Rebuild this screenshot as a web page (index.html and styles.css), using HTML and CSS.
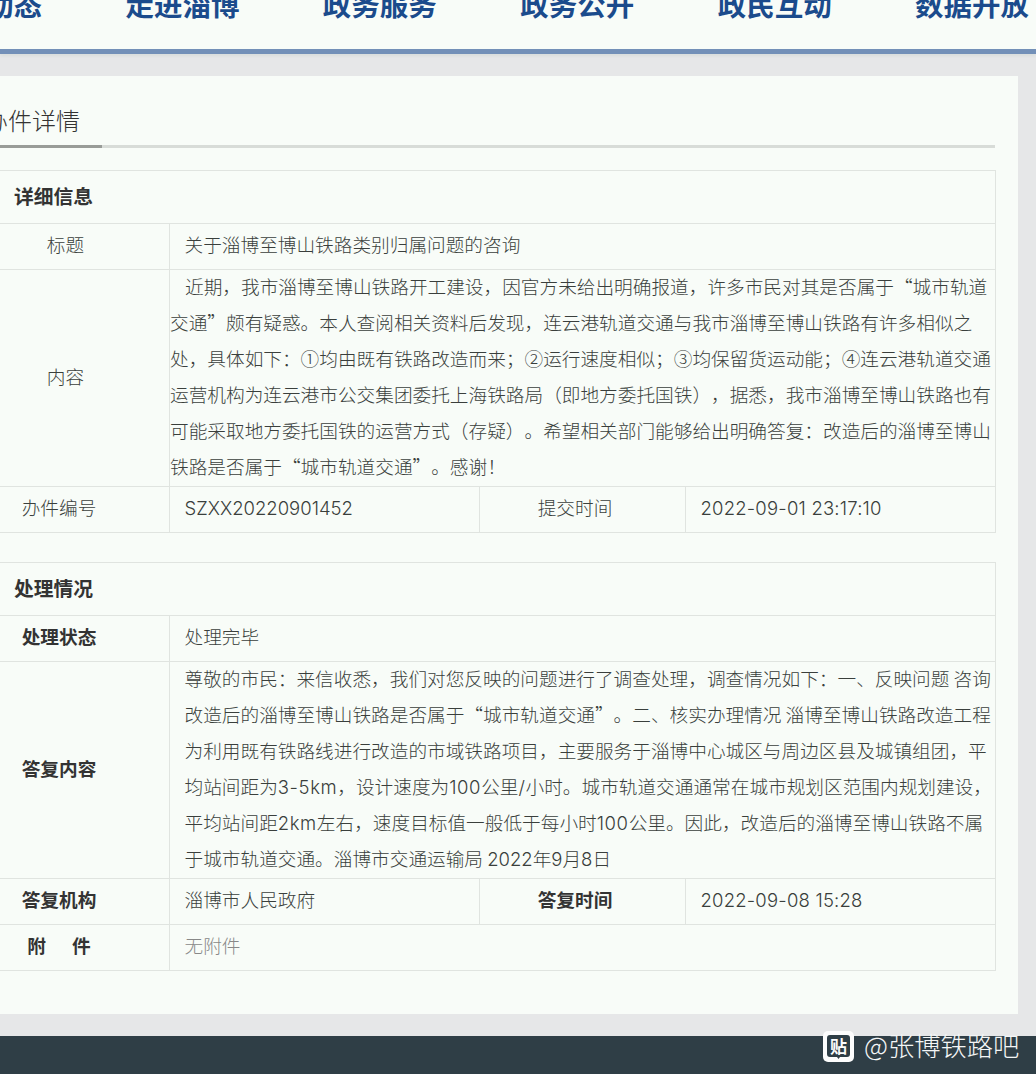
FILE: index.html
```html
<!DOCTYPE html>
<html lang="zh-CN">
<head>
<meta charset="utf-8">
<title>办件详情</title>
<link rel="stylesheet" href="styles.css">
</head>
<body>
<div class="page">
  <header class="masthead">
    <nav class="nav">
      <a>城市动态</a><a>走进淄博</a><a>政务服务</a><a>政务公开</a><a>政民互动</a><a>数据开放</a>
    </nav>
  </header>
  <main class="card">
    <div class="tabs"><span class="tab">办件详情</span></div>
    <table class="detail">
      <colgroup><col class="narrow"><col class="wide"><col class="narrow"><col class="wide"></colgroup>
      <tr class="head"><th colspan="4">详细信息</th></tr>
      <tr><td class="label">标题</td><td colspan="3" class="value">关于淄博至博山铁路类别归属问题的咨询</td></tr>
      <tr><td class="label">内容</td><td colspan="3" class="prose indent"><div class="prose-body"><span class="first">近期，我市淄博至博山铁路开工建设，因官方未给出明确报道，许多市民对其是否属于“城市轨道</span><br>交通”颇有疑惑。本人查阅相关资料后发现，连云港轨道交通与我市淄博至博山铁路有许多相似之<br>处，具体如下：①均由既有铁路改造而来；②运行速度相似；③均保留货运动能；④连云港轨道交通<br>运营机构为连云港市公交集团委托上海铁路局（即地方委托国铁），据悉，我市淄博至博山铁路也有<br>可能采取地方委托国铁的运营方式（存疑）。希望相关部门能够给出明确答复：改造后的淄博至博山<br>铁路是否属于“城市轨道交通”。感谢！</div></td></tr>
      <tr><td class="label offset">办件编号</td><td class="value"><span class="num">SZXX20220901452</span></td><td class="label offset">提交时间</td><td class="value"><span class="num stamp">2022-09-01 23:17:10</span></td></tr>
    </table>
    <table class="detail strong">
      <colgroup><col class="narrow"><col class="wide"><col class="narrow"><col class="wide"></colgroup>
      <tr class="head"><th colspan="4">处理情况</th></tr>
      <tr><td class="label offset">处理状态</td><td colspan="3" class="value">处理完毕</td></tr>
      <tr><td class="label offset">答复内容</td><td colspan="3" class="prose"><div class="prose-body">尊敬的市民：来信收悉，我们对您反映的问题进行了调查处理，调查情况如下：一、反映问题 咨询<br>改造后的淄博至博山铁路是否属于“城市轨道交通”。二、核实办理情况 淄博至博山铁路改造工程<br>为利用既有铁路线进行改造的市域铁路项目，主要服务于淄博中心城区与周边区县及城镇组团，平<br>均站间距为<span class="num loose">3-5km</span>，设计速度为<span class="num loose">100</span>公里<span class="num loose">/</span>小时。城市轨道交通通常在城市规划区范围内规划建设，<br>平均站间距<span class="num loose">2km</span>左右，速度目标值一般低于每小时<span class="num loose">100</span>公里。因此，改造后的淄博至博山铁路不属<br>于城市轨道交通。淄博市交通运输局 <span class="num">2022</span>年<span class="num">9</span>月<span class="num">8</span>日</div></td></tr>
      <tr><td class="label offset">答复机构</td><td class="value">淄博市人民政府</td><td class="label offset">答复时间</td><td class="value"><span class="num stamp">2022-09-08 15:28</span></td></tr>
      <tr><td class="label offset">附<span class="gap"></span>件</td><td colspan="3" class="value muted">无附件</td></tr>
    </table>
  </main>
  <footer class="footer"></footer>
</div>
<div class="mark">
  <svg class="mark-icon" viewBox="0 0 31 31" aria-hidden="true">
    <rect x="0" y="0" width="31" height="31" rx="5" fill="#fdfdfd"/>
    <path d="M7 4h17a3 3 0 0 1 3 3v16a3 3 0 0 1-3 3h-7l-1.500 2-1.500-2H7a3 3 0 0 1-3-3V7a3 3 0 0 1 3-3z" fill="#2f3e46"/>
    <text x="15.500" y="21.500" text-anchor="middle" class="mark-glyph">贴</text>
  </svg>
  <span class="mark-text">@张博铁路吧</span>
</div>
</body>
</html>
```
FILE: styles.css
```css
* { box-sizing: border-box; }
html, body { margin: 0; height: 1074px; overflow: hidden; }
body {
  position: relative;
  background: #e6e7e8;
  font-family: "Noto Sans CJK SC", sans-serif;
  font-weight: 300;
  color: #3a3f3c;
  font-size: 18.670px;
  text-spacing-trim: space-all;
}
.num { font-family: Inter, sans-serif; font-size: 18.500px; line-height: 1; }
.stamp { letter-spacing: 0.200px; }
.loose { letter-spacing: 0.600px; }
.page { margin-top: -30px; }
.masthead {
  position: relative;
  height: 84px;
  background: #f8fcf8;
  border-bottom: 5px solid #7390b8;
  box-shadow: 0 2px 3px rgba(0, 60, 40, 0.06);
  overflow: hidden;
}
.nav {
  display: flex;
  gap: 83.400px;
  margin-left: -72px;
  width: 1300px;
  padding-top: 14px;
  font-size: 28.500px;
  line-height: 40px;
  font-weight: 700;
  color: #1b4b8c;
  white-space: nowrap;
}
.card {
  width: 1078px;
  height: 938px;
  margin: 22px 0 22px -60px;
  padding: 24px 23px 0;
  background: #f8fcf8;
}
.tabs {
  height: 48px;
  border-bottom: 3px solid #d8dcd8;
}
.tab {
  display: block;
  width: 139px;
  height: 48px;
  padding-left: 21px;
  font-size: 24px;
  line-height: 40px;
  color: #333;
  border-bottom: 3px solid #999c98;
}
.detail {
  width: 1032px;
  margin-top: 22px;
  table-layout: fixed;
  border-collapse: collapse;
  line-height: 30px;
}
.detail + .detail { margin-top: 29px; }
.narrow { width: 206px; }
.wide { width: 310px; }
.detail th, .detail td { border: 1px solid #e0e4e0; padding: 0 0 6px; }
.detail .head th {
  height: 53px;
  padding: 0 0 2px 50px;
  text-align: left;
  font-size: 19.800px;
  font-weight: 700;
  color: #333;
}
.detail td { height: 46px; }
.detail td.label { text-align: center; padding-right: 2px; padding-bottom: 5px; }
.detail td.offset { padding-right: 15px; }
.strong .label { font-weight: 700; color: #333; }
.gap { display: inline-block; width: 26px; }
.detail td.value { padding-left: 14.500px; }
.detail td.prose { padding: 0 0 0 14.500px; line-height: 36px; white-space: nowrap; }
.detail td.indent { padding-left: 0; }
.prose-body { margin: -2px 0 2px; }
.first { margin-left: 15px; }
.muted { color: #888; }
.footer { height: 60px; margin-top: 22px; background: #2f3e46; }
.mark {
  position: absolute;
  top: 1031px;
  left: 823px;
  display: flex;
  align-items: flex-start;
  gap: 10px;
}
.mark-icon { width: 31px; height: 31px; }
.mark-glyph { font-size: 17px; font-weight: 700; fill: #fdfdfd; }
.mark-text { font-size: 26.300px; line-height: 28px; color: #f4f6f6; white-space: nowrap; }
```
